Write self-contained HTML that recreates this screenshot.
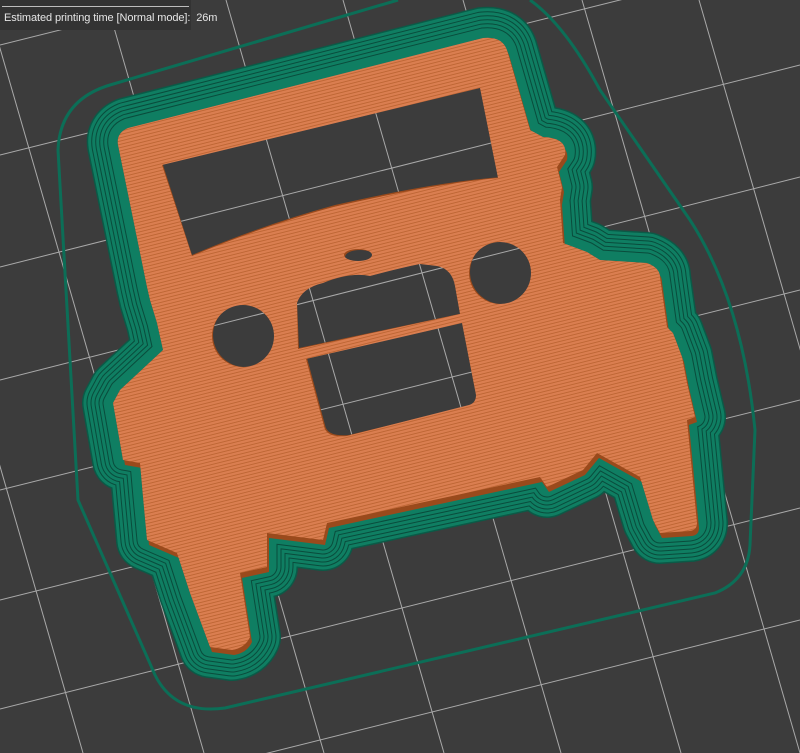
<!DOCTYPE html>
<html><head><meta charset="utf-8"><style>
html,body{margin:0;padding:0;background:#3c3c3c;width:800px;height:753px;overflow:hidden;}
#wrap{position:relative;width:800px;height:753px;overflow:hidden;}
svg{position:absolute;left:0;top:0;display:block;}
#panel{position:absolute;left:0;top:0;width:191px;height:30px;background:#333333;}
#panel .ln{position:absolute;left:2px;top:6px;width:187px;height:1px;background:#bdbdbd;}
#panel .tx{position:absolute;left:4px;top:12px;font:11px "Liberation Sans",sans-serif;color:#e6e6e6;white-space:nowrap;letter-spacing:-0.1px;}
</style></head><body><div id="wrap">
<svg width="800" height="753" viewBox="0 0 800 753">
<defs>
<g id="grid" stroke="#a9a9a9" stroke-width="1" fill="none">
<line x1="-135" y1="0" x2="83" y2="753"/>
<line x1="-14" y1="0" x2="204" y2="753"/>
<line x1="106" y1="0" x2="324" y2="753"/>
<line x1="226" y1="0" x2="444" y2="753"/>
<line x1="343" y1="0" x2="561" y2="753"/>
<line x1="463" y1="0" x2="681" y2="753"/>
<line x1="582" y1="0" x2="800" y2="753"/>
<line x1="699" y1="0" x2="917" y2="753"/>
<line x1="0" y1="45" x2="800" y2="-155"/>
<line x1="0" y1="155" x2="800" y2="-45"/>
<line x1="0" y1="267" x2="800" y2="65"/>
<line x1="0" y1="380" x2="800" y2="177"/>
<line x1="0" y1="490" x2="800" y2="290"/>
<line x1="0" y1="600" x2="800" y2="400"/>
<line x1="0" y1="709" x2="800" y2="508"/>
<line x1="0" y1="820" x2="800" y2="620"/>
</g>
<path id="outer" d="M128,128 L483,38 Q502,36 507,50 L530,130 L543,137 Q568,138 565,155 L557,167 L562,187 L560,200 L563,243 L587,252 L600,260 L647,263 Q660,268 660,277 L667,327 L673,333 L682,357 L687,383 L695,417 L687,420 L697,523 Q697,530 690,531 L660,533 L653,520 L640,477 L597,453 L583,470 L547,487 L540,477 L327,523 L323,540 L267,533 L267,567 L240,573 L250,637 Q245,648 232,650 L210,647 L190,593 L177,553 L147,540 L143,497 L140,463 L123,460 L113,403 L120,390 L163,350 L157,323 L150,300 L147,287 L118,145 Q116,133 128,128 Z"/>
<clipPath id="oc"><use href="#outer"/></clipPath>
<pattern id="stripe" width="6" height="3.2" patternUnits="userSpaceOnUse" patternTransform="rotate(-14)">
<rect width="6" height="3.2" fill="#da7e50"/>
<rect y="2.3" width="6" height="0.9" fill="#bd6533"/>
</pattern>
</defs>
<rect width="800" height="753" fill="#3c3c3c"/>
<use href="#grid"/>
<path d="M398,0 L110,85 Q60,100 58,150 L78,500 L155,675 Q175,715 225,708 L715,593 Q748,580 750,545 L755,430 Q742,300 690,220 L600,90 Q565,25 530,0" fill="none" stroke="#0c6e57" stroke-width="3"/>
<g fill="none" stroke-linejoin="round">
<use href="#outer" stroke="#0b5a47" stroke-width="62"/>
<use href="#outer" stroke="#0f7e62" stroke-width="59"/>
<use href="#outer" stroke="#0a4c3c" stroke-width="53"/>
<use href="#outer" stroke="#0f7e62" stroke-width="51"/>
<use href="#outer" stroke="#0a4c3c" stroke-width="45"/>
<use href="#outer" stroke="#0f7e62" stroke-width="43"/>
<use href="#outer" stroke="#0a4c3c" stroke-width="37"/>
<use href="#outer" stroke="#0f7e62" stroke-width="35"/>
<use href="#outer" stroke="#0a4c3c" stroke-width="29"/>
<use href="#outer" stroke="#0f7e62" stroke-width="27"/>
<use href="#outer" stroke="#0a4c3c" stroke-width="21"/>
<use href="#outer" stroke="#0f7e62" stroke-width="19"/>
</g>
<use href="#outer" fill="#3c3c3c"/>
<g clip-path="url(#oc)"><use href="#grid"/></g>
<g fill-rule="evenodd">
<path transform="translate(2,5)" fill="#9a4a1c" d="M128,128 L483,38 Q502,36 507,50 L530,130 L543,137 Q568,138 565,155 L557,167 L562,187 L560,200 L563,243 L587,252 L600,260 L647,263 Q660,268 660,277 L667,327 L673,333 L682,357 L687,383 L695,417 L687,420 L697,523 Q697,530 690,531 L660,533 L653,520 L640,477 L597,453 L583,470 L547,487 L540,477 L327,523 L323,540 L267,533 L267,567 L240,573 L250,637 Q245,648 232,650 L210,647 L190,593 L177,553 L147,540 L143,497 L140,463 L123,460 L113,403 L120,390 L163,350 L157,323 L150,300 L147,287 L118,145 Q116,133 128,128 Z
M160,157 L480,80 L500,172 Q433,177 333,200 Q260,220 190,250 Z
M295,297 Q300,282 323,277 Q350,266 370,270 Q400,262 420,258 L437,260 Q452,263 455,280 L462,308 L297,343 Z
M305,353 L463,317 L477,390 Q477,398 470,400 L347,430 Q325,432 323,420 Z
M211,330 a32,32 0 1,0 64,0 a32,32 0 1,0 -64,0 Z
M468,267 a32,32 0 1,0 64,0 a32,32 0 1,0 -64,0 Z
M343,252 a15,7 0 1,0 30,0 a15,7 0 1,0 -30,0 Z"/>
<path fill="url(#stripe)" d="M128,128 L483,38 Q502,36 507,50 L530,130 L543,137 Q568,138 565,155 L557,167 L562,187 L560,200 L563,243 L587,252 L600,260 L647,263 Q660,268 660,277 L667,327 L673,333 L682,357 L687,383 L695,417 L687,420 L697,523 Q697,530 690,531 L660,533 L653,520 L640,477 L597,453 L583,470 L547,487 L540,477 L327,523 L323,540 L267,533 L267,567 L240,573 L250,637 Q245,648 232,650 L210,647 L190,593 L177,553 L147,540 L143,497 L140,463 L123,460 L113,403 L120,390 L163,350 L157,323 L150,300 L147,287 L118,145 Q116,133 128,128 Z
M162,165 L480,88 L498,178 Q433,184 333,207 Q260,227 192,256 Z
M297,303 Q302,288 323,283 Q350,272 370,276 Q400,268 420,264 L437,266 Q452,269 455,286 L460,314 L298,349 Z
M306,359 L462,323 L476,395 Q476,403 469,405 L347,436 Q326,438 324,426 Z
M212,336 a31,31 0 1,0 62,0 a31,31 0 1,0 -62,0 Z
M469,273 a31,31 0 1,0 62,0 a31,31 0 1,0 -62,0 Z
M344,255 a14,6 0 1,0 28,0 a14,6 0 1,0 -28,0 Z"/>
</g>
</svg>
<div id="panel"><div class="ln"></div><div class="tx">Estimated printing time [Normal mode]:&nbsp; 26m</div></div>
</div></body></html>
